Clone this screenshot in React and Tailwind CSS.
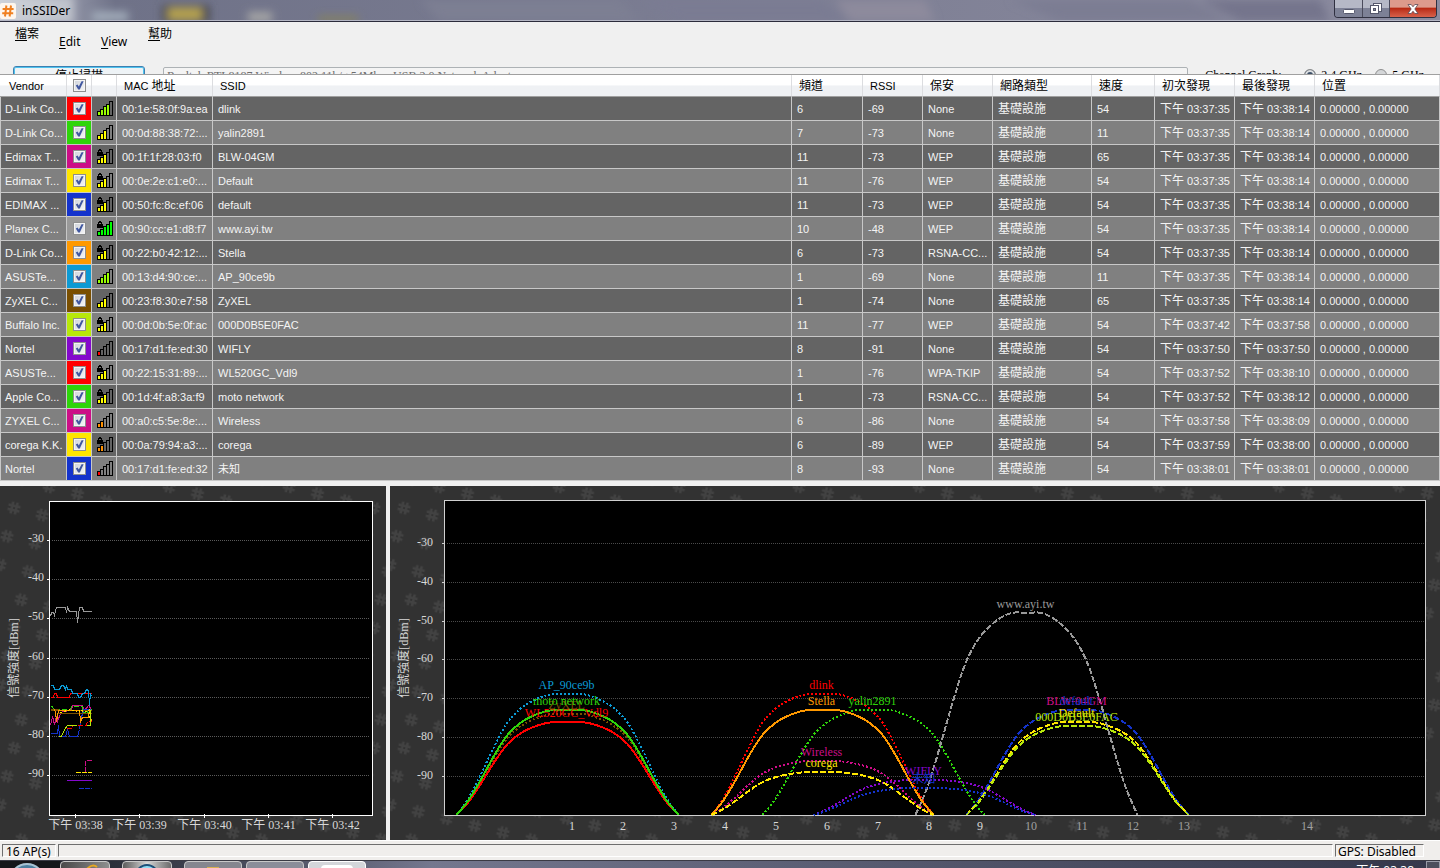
import React, { useState } from "react";

const NETWORKS = [
  { vendor: "D-Link Co...", swatch: "bg-[#ff0000]", bars: 4, lock: false, mac: "00:1e:58:0f:9a:ea", ssid: "dlink", channel: 6, rssi: -69, security: "None", speed: 54, first: "03:37:35", last: "03:38:14" },
  { vendor: "D-Link Co...", swatch: "bg-[#2ed40a]", bars: 3, lock: false, mac: "00:0d:88:38:72:...", ssid: "yalin2891", channel: 7, rssi: -73, security: "None", speed: 11, first: "03:37:35", last: "03:38:14" },
  { vendor: "Edimax T...", swatch: "bg-[#cc0e87]", bars: 3, lock: true, mac: "00:1f:1f:28:03:f0", ssid: "BLW-04GM", channel: 11, rssi: -73, security: "WEP", speed: 65, first: "03:37:35", last: "03:38:14" },
  { vendor: "Edimax T...", swatch: "bg-[#ffe600]", bars: 3, lock: true, mac: "00:0e:2e:c1:e0:...", ssid: "Default", channel: 11, rssi: -76, security: "WEP", speed: 54, first: "03:37:35", last: "03:38:14" },
  { vendor: "EDIMAX ...", swatch: "bg-[#1433cc]", bars: 3, lock: true, mac: "00:50:fc:8c:ef:06", ssid: "default", channel: 11, rssi: -73, security: "WEP", speed: 54, first: "03:37:35", last: "03:38:14" },
  { vendor: "Planex C...", swatch: "bg-[#999999]", bars: 5, lock: true, mac: "00:90:cc:e1:d8:f7", ssid: "www.ayi.tw", channel: 10, rssi: -48, security: "WEP", speed: 54, first: "03:37:35", last: "03:38:14" },
  { vendor: "D-Link Co...", swatch: "bg-[#ff9900]", bars: 3, lock: true, mac: "00:22:b0:42:12:...", ssid: "Stella", channel: 6, rssi: -73, security: "RSNA-CC...", speed: 54, first: "03:37:35", last: "03:38:14" },
  { vendor: "ASUSTe...", swatch: "bg-[#0c9ad4]", bars: 4, lock: false, mac: "00:13:d4:90:ce:...", ssid: "AP_90ce9b", channel: 1, rssi: -69, security: "None", speed: 11, first: "03:37:35", last: "03:38:14" },
  { vendor: "ZyXEL C...", swatch: "bg-[#7a4f00]", bars: 3, lock: false, mac: "00:23:f8:30:e7:58", ssid: "ZyXEL", channel: 1, rssi: -74, security: "None", speed: 65, first: "03:37:35", last: "03:38:14" },
  { vendor: "Buffalo Inc.", swatch: "bg-[#b8e80a]", bars: 3, lock: true, mac: "00:0d:0b:5e:0f:ac", ssid: "000D0B5E0FAC", channel: 11, rssi: -77, security: "WEP", speed: 54, first: "03:37:42", last: "03:37:58" },
  { vendor: "Nortel", swatch: "bg-[#8408cc]", bars: 1, lock: false, mac: "00:17:d1:fe:ed:30", ssid: "WIFLY", channel: 8, rssi: -91, security: "None", speed: 54, first: "03:37:50", last: "03:37:50" },
  { vendor: "ASUSTe...", swatch: "bg-[#ff0000]", bars: 3, lock: true, mac: "00:22:15:31:89:...", ssid: "WL520GC_Vdl9", channel: 1, rssi: -76, security: "WPA-TKIP", speed: 54, first: "03:37:52", last: "03:38:10" },
  { vendor: "Apple Co...", swatch: "bg-[#2ed40a]", bars: 3, lock: true, mac: "00:1d:4f:a8:3a:f9", ssid: "moto network", channel: 1, rssi: -73, security: "RSNA-CC...", speed: 54, first: "03:37:52", last: "03:38:12" },
  { vendor: "ZYXEL C...", swatch: "bg-[#cc0e87]", bars: 2, lock: false, mac: "00:a0:c5:5e:8e:...", ssid: "Wireless", channel: 6, rssi: -86, security: "None", speed: 54, first: "03:37:58", last: "03:38:09" },
  { vendor: "corega K.K.", swatch: "bg-[#ffe600]", bars: 2, lock: true, mac: "00:0a:79:94:a3:...", ssid: "corega", channel: 6, rssi: -89, security: "WEP", speed: 54, first: "03:37:59", last: "03:38:00" },
  { vendor: "Nortel", swatch: "bg-[#1433cc]", bars: 1, lock: false, mac: "00:17:d1:fe:ed:32", ssid: "未知", channel: 8, rssi: -93, security: "None", speed: 54, first: "03:38:01", last: "03:38:01" },
];

const BAR_COLORS = { 1: "#ff0000", 2: "#ff9000", 3: "#ffff00", 4: "#99ff00", 5: "#00ff00" };
const BAR_HEIGHTS = [5, 7, 10, 12, 15];

// Channel graph: one hump per network, drawn in this order
const HUMPS = [
  { ssid: "AP_90ce9b", channel: 1, rssi: -69, color: "#0c9ad4", dash: "2 2" },
  { ssid: "ZyXEL", channel: 1, rssi: -74, color: "#7a4f00", dash: "2 2" },
  { ssid: "WL520GC_Vdl9", channel: 1, rssi: -76, color: "#ff0000" },
  { ssid: "moto network", channel: 1, rssi: -73, color: "#2ed40a" },
  { ssid: "dlink", channel: 6, rssi: -69, color: "#ff0000", dash: "2 2" },
  { ssid: "yalin2891", channel: 7, rssi: -73, color: "#2ed40a", dash: "2 2" },
  { ssid: "BLW-04GM", channel: 11, rssi: -73, color: "#cc0e87", dash: "6 2" },
  { ssid: "default", channel: 11, rssi: -73, color: "#1433cc", dash: "6 2" },
  { ssid: "Default", channel: 11, rssi: -76, color: "#ffe600", dash: "6 2" },
  { ssid: "www.ayi.tw", channel: 10, rssi: -48, color: "#999999", dash: "6 2" },
  { ssid: "Stella", channel: 6, rssi: -73, color: "#ff9900" },
  { ssid: "000D0B5E0FAC", channel: 11, rssi: -77, color: "#b8e80a", dash: "6 2" },
  { ssid: "WIFLY", channel: 8, rssi: -91, color: "#8408cc", dash: "2 2" },
  { ssid: "Wireless", channel: 6, rssi: -86, color: "#cc0e87", dash: "2 2" },
  { ssid: "corega", channel: 6, rssi: -89, color: "#ffe600", dash: "6 2" },
  { ssid: "未知", channel: 8, rssi: -93, color: "#1433cc", dash: "2 2" },
];

const TRACES = [
  { color: "#999999", points: "50,130 51,126 53,126 54,129 56,121 65,121 66,126 67,121 69,125 76,125 77,136 79,121 82,121 83,125 91,125" },
  { color: "#ff0000", points: "50,211 53,211 54,207 56,207 57,211 69,211 70,207 91,207" },
  { color: "#cc0e87", points: "50,239 52,230 54,238 56,230 57,235 60,227 62,225 71,224 72,219 82,219 84,224 88,219 91,223" },
  { color: "#1433cc", points: "50,247 57,247 58,239 59,250 65,250 67,243 69,250 77,250 79,243 80,235 83,223 91,223" },
  { color: "#2ed40a", dash: "5 2", points: "50,220 52,220 53,223 70,223 71,220 82,220 83,226 85,226 86,223 88,227 91,223" },
  { color: "#7a4f00", points: "50,223 58,223 58,227 91,227" },
  { color: "#7a4f00", points: "50,224 60,224 91,224" },
  { color: "#ff9900", points: "54,223 55,226 56,235 58,224 79,224 80,235 82,231 88,231 89,223 91,235" },
  { color: "#ffe600", dash: "2 2", points: "60,226 70,223 78,226 80,223 84,226 89,223 90,239" },
  { color: "#ff0000", dash: "5 2", points: "66,242 71,242 72,239 86,239 87,235 91,235" },
  { color: "#b8e80a", points: "58,250 61,250 64,243 67,239 76,239" },
  { color: "#b8e80a", points: "86,239 90,239 90,223" },
  { color: "#0c9ad4", points: "50,199 53,199 54,203 59,203 61,199 63,199 65,203 66,199 67,203 71,203 72,207 77,207 78,211 80,211 82,207 84,207 86,203 88,204 89,219 90,207 91,210" },
  { color: "#cc0e87", dash: "5 1", points: "85,285 85,274 91,274" },
  { color: "#ffe600", dash: "5 1", points: "75,286 91,286" },
  { color: "#8408cc", points: "66,294 91,294" },
  { color: "#1433cc", dash: "5 1", points: "78,302 91,302" },
];

// Half of the hump: distance from the centre and share of the peak height
const HUMP_SHAPE = [
  [0, 1], [15, 1], [30, 0.962], [46, 0.885], [60, 0.763], [73, 0.572], [87, 0.33], [99, 0.14], [111, 0],
];

const BASE_Y = 329;
const channelX = (channel) => 177.5 + 51 * (channel - 1);
const levelY = (rssi) => Math.round(BASE_Y - (rssi + 100) * 3.89);

const humpPath = (channel, rssi) => {
  const cx = channelX(channel);
  const height = BASE_Y - levelY(rssi);
  const left = [...HUMP_SHAPE].reverse().map(([d, h]) => [cx - d, BASE_Y - h * height]);
  const right = HUMP_SHAPE.slice(1).map(([d, h]) => [cx + d, BASE_Y - h * height]);
  const pts = [...left, ...right];
  let path = `M${pts[0][0]},${pts[0][1]}`;
  for (let i = 0; i < pts.length - 1; i++) {
    const p0 = pts[i - 1] || pts[i];
    const p1 = pts[i];
    const p2 = pts[i + 1];
    const p3 = pts[i + 2] || p2;
    path += `C${p1[0] + (p2[0] - p0[0]) / 6},${p1[1] + (p2[1] - p0[1]) / 6} `;
    path += `${p2[0] - (p3[0] - p1[0]) / 6},${p2[1] - (p3[1] - p1[1]) / 6} ${p2[0]},${p2[1]}`;
  }
  return path;
};

const CheckBox = ({ label, checked, onChange }) => (
  <span className="grid size-[13px] mx-auto">
    <input
      type="checkbox"
      aria-label={label}
      checked={checked}
      onChange={onChange}
      className="appearance-none col-start-1 row-start-1 size-[13px] border border-[#8e8f8f] bg-linear-to-br from-[#cfd3da] to-[#f6f6f6] outline outline-[#f4f4f4] -outline-offset-2"
    />
    {checked && (
      <svg viewBox="0 0 13 13" className="col-start-1 row-start-1 size-[13px] pointer-events-none">
        <path d="M2.8 6.4 L4.6 5.4 L5.8 7.6 L8.6 2.2 L10.6 2.2 L6.8 10.6 L5.2 10.6 Z" fill="#4057a0" />
      </svg>
    )}
  </span>
);

const SignalIcon = ({ bars, lock }) => (
  <svg viewBox="0 0 16 15" className="block w-4 h-[15px] ml-[5px]" shapeRendering="crispEdges">
    {BAR_HEIGHTS.map((h, i) => (
      <rect
        key={h}
        x={i * 3 + 0.5}
        y={15 - h + 0.5}
        width="3"
        height={h - 1}
        fill={i < bars ? BAR_COLORS[bars] : "none"}
        stroke="#000"
      />
    ))}
    {lock && (
      <g>
        <path d="M1.5 4 V1.5 H2.5 V0.5 H3.5 V1.5 H4.5 V4" fill="none" stroke="#000" />
        <rect x="0" y="3" width="6" height="4" fill="#000" />
      </g>
    )}
  </svg>
);

// Dark backdrop with the tilted # marks
const Backdrop = ({ id, width }) => (
  <>
    <defs>
      <pattern
        id={id}
        width="29.1"
        height="29.1"
        patternUnits="userSpaceOnUse"
        patternTransform="translate(14 22) rotate(14) translate(-14.5 -14.5)"
      >
        <path
          d="M12.4 8.4 V20.6 M16.8 8.4 V20.6 M8.4 12.4 H20.6 M8.4 16.8 H20.6"
          stroke="#424242"
          strokeWidth="2.4"
        />
      </pattern>
    </defs>
    <rect width={width} height="354" fill="#323232" />
    <rect width={width} height="354" fill={`url(#${id})`} />
  </>
);

const TimeGraph = () => (
  <svg
    viewBox="0 0 386 354"
    className="block w-full h-auto text-xs font-['Liberation_Serif','Noto_Sans_CJK_TC',serif]"
    fill="#d8d8d8"
  >
    <Backdrop id="hash-time" width="386" />
    <rect x="49.5" y="15.5" width="323" height="314" fill="#000" stroke="#fff" />
    {[-30, -40, -50, -60, -70, -80, -90].map((level, i) => {
      const y = Math.round(54 + i * 39.2) + 0.5;
      return (
        <g key={level}>
          <line x1="52" x2="370" y1={y} y2={y} stroke="#5a5a5a" strokeDasharray="1 1" shapeRendering="crispEdges" />
          <line x1="47" x2="50" y1={y} y2={y} stroke="#fff" />
          <text x="44" y={y + 1.5} textAnchor="end">{level}</text>
        </g>
      );
    })}
    {["03:38", "03:39", "03:40", "03:41", "03:42"].map((time, i) => {
      const x = Math.round(75 + i * 64.3) + 0.5;
      return (
        <g key={time}>
          <line x1={x} x2={x} y1="328" y2="332" stroke="#fff" />
          <text x={x} y="343" textAnchor="middle">下午 {time}</text>
        </g>
      );
    })}
    <text transform="translate(18 172) rotate(-90)" textAnchor="middle">信號強度[dBm]</text>
    {TRACES.map((t, i) => (
      <polyline
        key={i}
        points={t.points}
        fill="none"
        stroke={t.color}
        strokeDasharray={t.dash}
        transform="translate(0.5 0.5)"
        shapeRendering="crispEdges"
      />
    ))}
  </svg>
);

const ChannelGraph = () => (
  <svg
    viewBox="0 0 1050 354"
    className="block w-full h-auto text-xs font-['Liberation_Serif','Noto_Sans_CJK_TC',serif]"
    fill="#d8d8d8"
  >
    <Backdrop id="hash-channel" width="1050" />
    <rect x="54.5" y="14.5" width="981" height="315" fill="#000" stroke="#d0d0d0" />
    {[-30, -40, -50, -60, -70, -80, -90].map((level) => {
      const y = levelY(level) + 0.5;
      return (
        <g key={level}>
          <line x1="57" x2="1034" y1={y} y2={y} stroke="#4a4a4a" strokeDasharray="1 1" shapeRendering="crispEdges" />
          <line x1="52" x2="55" y1={y} y2={y} stroke="#d0d0d0" />
          <text x="43" y={y + 2.5} textAnchor="end">{level}</text>
        </g>
      );
    })}
    {[1, 2, 3, 4, 5, 6, 7, 8, 9, 10, 11, 12, 13].map((ch) => (
      <text key={ch} x={182 + (ch - 1) * 51} y="344" textAnchor="middle" fill={ch > 9 ? "#a0a0a0" : "#d8d8d8"}>
        {ch}
      </text>
    ))}
    <text x="917" y="344" textAnchor="middle" fill="#a0a0a0">14</text>
    <text transform="translate(18 172) rotate(-90)" textAnchor="middle">信號強度[dBm]</text>
    {HUMPS.map((h) => (
      <path
        key={h.ssid}
        d={humpPath(h.channel, h.rssi)}
        fill="none"
        stroke={h.color}
        strokeWidth="2"
        strokeDasharray={h.dash}
        shapeRendering="crispEdges"
      />
    ))}
    {HUMPS.map((h) => (
      <text key={h.ssid} x={channelX(h.channel) - 1} y={levelY(h.rssi) - 5} textAnchor="middle" fill={h.color}>
        {h.ssid}
      </text>
    ))}
  </svg>
);

const TitleBar = () => (
  <header className="relative shrink-0 h-[22px] flex items-start justify-between overflow-hidden bg-linear-to-r from-[#c8ccd6] via-[#6f7288] via-[8%] to-[#8b8b9f] border-b border-[#2c2c3c]">
    <svg className="absolute inset-0 size-full" preserveAspectRatio="none" viewBox="0 0 1440 21">
      <defs>
        <filter id="smear" x="-50%" y="-50%" width="200%" height="200%">
          <feGaussianBlur stdDeviation="4" />
        </filter>
      </defs>
      <g filter="url(#smear)">
        <rect x="-6" y="-4" width="80" height="28" fill="#d2d5dc" opacity="0.7" />
        <rect x="92" y="12" width="36" height="9" fill="#a5b0bd" />
        <rect x="162" y="5" width="48" height="18" fill="#4a4b54" />
        <rect x="168" y="8" width="34" height="12" fill="#b8a44f" />
        <rect x="248" y="12" width="24" height="10" fill="#a6a6a6" />
        <rect x="318" y="16" width="40" height="6" fill="#85825f" />
        <path d="M420 0 H620 L640 21 H440 Z" fill="#7d7f93" />
        <path d="M640 0 H820 L850 21 H680 Z" fill="#7a7c93" />
        <path d="M835 0 H925 L935 21 H850 Z" fill="#8d8a9c" />
        <path d="M1010 0 H1190 L1230 21 H1060 Z" fill="#7c7d93" />
        <path d="M1200 0 H1320 L1330 21 H1240 Z" fill="#74758c" />
      </g>
      <rect y="20" width="1440" height="1" fill="#b4b6c4" />
    </svg>
    <div className="relative flex items-center gap-[6px] h-[21px]">
      <svg viewBox="0 0 16 16" className="size-4">
        <rect width="16" height="16" rx="2" fill="#fdf6ee" />
        <path d="M6.4 2.5 L5 13.5 M11 2.5 L9.6 13.5 M2.6 6 H13.6 M2.2 10.2 H13.2" stroke="#f08020" strokeWidth="2" />
      </svg>
      <h1 className="text-xs text-black">inSSIDer</h1>
    </div>
    <div className="relative flex h-[18px] mr-[3px] rounded-b border border-t-0 border-[#2f3040] overflow-hidden">
      <button type="button" aria-label="Minimize" className="w-7 grid place-items-center bg-linear-to-b from-[#b5b8c6] from-45% to-[#7d8196] to-50% border-r border-[#4a4b5c]">
        <svg viewBox="0 0 12 12" className="size-3">
          <rect x="0.5" y="6.5" width="11" height="4" rx="1" fill="#fff" stroke="#55586c" />
        </svg>
      </button>
      <button type="button" aria-label="Restore" className="w-[27px] grid place-items-center bg-linear-to-b from-[#b5b8c6] from-45% to-[#7d8196] to-50% border-r border-[#4a4b5c]">
        <svg viewBox="0 0 12 12" className="size-3">
          <rect x="3.5" y="0.5" width="8" height="8" fill="#fff" stroke="#55586c" />
          <rect x="0.5" y="2.5" width="8" height="8" fill="#fff" stroke="#55586c" />
          <rect x="3.5" y="5.5" width="2" height="2" fill="#8a8da0" stroke="#55586c" />
        </svg>
      </button>
      <button type="button" aria-label="Close" className="w-[46px] grid place-items-center bg-linear-to-b from-[#dd9a8c] from-40% via-[#b92a14] via-50% to-[#d8604a]">
        <svg viewBox="0 0 12 12" className="size-3">
          <path d="M1 1.5 H4.2 L6 3.8 L7.8 1.5 H11 L7.8 6 L11 10.5 H7.8 L6 8.2 L4.2 10.5 H1 L4.2 6 Z" fill="#fff" stroke="#5c4a55" strokeWidth="0.8" />
        </svg>
      </button>
    </div>
  </header>
);

const Toolbar = () => {
  const [band, setBand] = useState("2.4");

  return (
    <div className="shrink-0 h-[52px] overflow-hidden bg-[#f0f0f0] text-xs text-black">
      <nav className="flex items-start h-11 pl-[15px] leading-4">
        <button type="button" className="pt-1 w-11 text-left"><u className="underline-offset-2">檔</u>案</button>
        <button type="button" className="pt-3 w-[42px] text-left"><u className="underline-offset-2">E</u>dit</button>
        <button type="button" className="pt-3 w-[47px] text-left"><u className="underline-offset-2">V</u>iew</button>
        <button type="button" className="pt-1 text-left"><u className="underline-offset-2">幫</u>助</button>
      </nav>
      <div className="flex items-start pl-[13px] pr-4 font-['Liberation_Serif','Noto_Sans_CJK_TC',serif]">
        <button type="button" className="w-[132px] h-5 shrink-0 leading-4 rounded-[3px] border border-[#3c7fb1] bg-[#eef3f6] inset-ring inset-ring-[#4fc3ee]">
          停止掃描
        </button>
        <select
          aria-label="Adapter"
          disabled
          className="appearance-none grow min-w-0 h-[18px] leading-4 mt-px ml-[18px] pl-[3px] rounded-[2px] border border-[#adb2b5] bg-[#f4f4f4] text-[#6d6d6d] opacity-100"
        >
          <option>Realtek RTL8187 Wireless 802.11b/g 54Mbps USB 2.0 Network Adapter</option>
        </select>
        <div className="flex items-center shrink-0 h-[18px] leading-4 ml-[17px]">
          <span className="w-[99px]">Channel Graph:</span>
          <label className="flex items-center gap-[5px] w-[71px]">
            <input
              type="radio"
              name="band"
              checked={band === "2.4"}
              onChange={() => setBand("2.4")}
              className="appearance-none size-3 rounded-full border border-[#8e8f8f] bg-[#3d4f66] inset-ring-2 inset-ring-[#dcdfe2]"
            />
            2.4 GHz
          </label>
          <label className="flex items-center gap-[5px]">
            <input
              type="radio"
              name="band"
              checked={band === "5"}
              onChange={() => setBand("5")}
              className="appearance-none size-3 rounded-full border border-[#8e8f8f] bg-[#d4d6d8]"
            />
            5 GHz
          </label>
        </div>
      </div>
    </div>
  );
};

const NetworkTable = () => {
  const [shown, setShown] = useState(NETWORKS.map(() => true));

  const toggle = (index) =>
    setShown(shown.map((v, i) => (i === index ? !v : v)));

  const allShown = shown.every(Boolean);

  return (
    <table className="w-full table-fixed border-separate border-spacing-0 border-t border-[#a0a0a0] text-[11px] leading-4 font-['Liberation_Sans','Noto_Sans_CJK_TC',sans-serif] whitespace-nowrap">
      <colgroup>
        <col className="w-[67px]" />
        <col className="w-[25px]" />
        <col className="w-[25px]" />
        <col className="w-24" />
        <col />
        <col className="w-[71px]" />
        <col className="w-[60px]" />
        <col className="w-[70px]" />
        <col className="w-[99px]" />
        <col className="w-[63px]" />
        <col className="w-20" />
        <col className="w-20" />
        <col className="w-[125px]" />
      </colgroup>
      <thead className="text-black text-left bg-linear-to-b from-white from-45% to-[#eff1f4] to-50% [&_th]:h-[22px] [&_th]:p-0 [&_th]:pl-[7px] [&_th]:font-normal [&_th]:border-r [&_th]:border-r-[#dcdde0] [&_th]:border-b [&_th]:border-b-[#a0a0a0]">
        <tr>
          <th><span className="pl-0.5">Vendor</span></th>
          <th className="pl-0!">
            <CheckBox label="Show all" checked={allShown} onChange={() => setShown(shown.map(() => !allShown))} />
          </th>
          <th aria-label="Signal"></th>
          <th>MAC <span className="text-xs">地址</span></th>
          <th>SSID</th>
          <th className="text-xs">頻道</th>
          <th>RSSI</th>
          <th className="text-xs">保安</th>
          <th className="text-xs">網路類型</th>
          <th className="text-xs">速度</th>
          <th className="text-xs">初次發現</th>
          <th className="text-xs">最後發現</th>
          <th className="text-xs">位置</th>
        </tr>
      </thead>
      <tbody className="text-[#f4f4f4] [&_td]:h-6 [&_td]:p-0 [&_td]:pl-[5px] [&_td]:border-r [&_td]:border-b [&_td]:border-[#c8c8c8]">
        {NETWORKS.map((n, i) => (
          <tr key={n.mac} className="odd:bg-[#646464] even:bg-[#808080]">
            <td className="border-l pl-1!">{n.vendor}</td>
            <td className={`pl-0! ${n.swatch}`}>
              <CheckBox label={`Show ${n.ssid}`} checked={shown[i]} onChange={() => toggle(i)} />
            </td>
            <td className="pl-0!"><SignalIcon bars={n.bars} lock={n.lock} /></td>
            <td>{n.mac}</td>
            <td>{n.ssid}</td>
            <td>{n.channel}</td>
            <td>{n.rssi}</td>
            <td>{n.security}</td>
            <td className="text-xs">基礎設施</td>
            <td>{n.speed}</td>
            <td><span className="text-xs">下午</span> {n.first}</td>
            <td><span className="text-xs">下午</span> {n.last}</td>
            <td>0.00000 , 0.00000</td>
          </tr>
        ))}
      </tbody>
    </table>
  );
};

const StatusBar = () => (
  <footer className="shrink-0 flex gap-[2px] h-[21px] pt-[3px] pb-[3px] pl-[2px] pr-4 bg-[#f0eeec] border-t border-b border-t-white border-b-[#3a3a44] text-xs leading-[13px] text-black">
    <span className="w-[54px] shrink-0 pl-[3px] border border-[#6e6e6e] border-r-white border-b-white whitespace-nowrap">16 AP(s)</span>
    <span className="grow border border-[#6e6e6e] border-r-white border-b-white"></span>
    <span className="w-[89px] shrink-0 pl-[2px] border border-[#6e6e6e] border-r-white border-b-white whitespace-nowrap">GPS: Disabled</span>
  </footer>
);

const Taskbar = () => (
  <div className="relative shrink-0 flex items-start justify-between h-10 bg-linear-to-r from-[#15181f] via-[#74778e] via-[30%] to-[#34374a]">
    <div className="flex items-start">
      <button type="button" aria-label="Start" className="w-[60px] h-10 flex justify-center bg-[#15161a]">
        <span className="size-9 mt-0.5 mr-[6px] rounded-full border-2 border-[#a9c4d4] bg-[#4c7f9f]"></span>
      </button>
      <span className="w-[50px] h-10 flex justify-end pr-[10px] rounded-t-sm border border-[#c8c8c8] bg-linear-to-r from-[#4a4a4a] to-[#8e8e8e]">
        <svg viewBox="0 0 14 14" className="size-[14px] mt-0.5">
          <path d="M1 6 Q7 -1 12 3" stroke="#e8a820" strokeWidth="2" fill="none" />
        </svg>
      </span>
      <span className="w-[50px] h-10 flex justify-center ml-3 rounded-t-sm border border-[#c8c8c8] bg-linear-to-r from-[#5c5c5c] via-[#d8d8d8] to-[#6c6c6c]">
        <span className="size-6 mt-0.5 rounded-full border-2 border-[#1d4f78] bg-[#8fdcf4]"></span>
      </span>
      <span className="w-[58px] h-10 flex justify-center ml-3 rounded-t-sm border border-[#c8c8c8] bg-[#85868f]">
        <span className="w-3 h-2 mt-[5px] bg-[#d8b050]"></span>
      </span>
      <span className="w-[58px] h-10 ml-1 rounded-t-sm border border-[#c8c8c8] bg-[#8b8d99]"></span>
      <span className="w-[58px] h-10 flex justify-center ml-1 rounded-t-sm border border-white bg-[#d4d6da]">
        <span className="w-8 h-6 mt-[3px] rounded-sm bg-white"></span>
      </span>
    </div>
    <div className="flex items-start">
      <time className="pt-0.5 pr-3 text-xs leading-4 text-white">下午 03:38</time>
      <button type="button" aria-label="Show desktop" className="w-[14px] h-10 border border-[#9a9ca8] bg-[#4c4e5c]"></button>
    </div>
  </div>
);

const App = () => {
  return (
    <div className="h-screen overflow-hidden flex flex-col bg-[#f0f0f0] font-['Noto_Sans','Noto_Sans_CJK_TC',sans-serif]">
      <TitleBar />
      <Toolbar />
      <NetworkTable />
      {/* Graphs */}
      <div className="shrink-0 grid grid-cols-[minmax(0,386fr)_minmax(0,1050fr)] gap-1 mt-[5px]">
        <TimeGraph />
        <ChannelGraph />
      </div>
      <StatusBar />
      <Taskbar />
    </div>
  );
};

export default App;
